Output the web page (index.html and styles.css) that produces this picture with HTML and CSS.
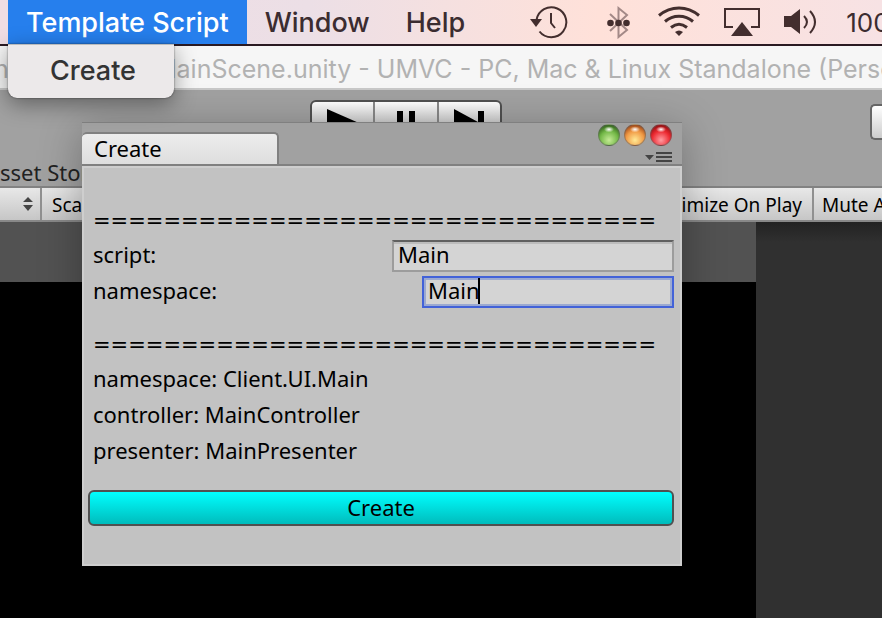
FILE: index.html
```html
<!DOCTYPE html>
<html lang="en"><head><meta charset="utf-8"><title>Unity</title><link rel="stylesheet" href="styles.css"></head>
<body>
<nav class="menubar">
  <div class="menus">
    <button class="menu active">Template Script</button>
    <button class="menu">Window</button>
    <button class="menu">Help</button>
  </div>
  <div class="status">
    <svg width="38" height="34" viewBox="0 0 38 34" fill="none" stroke="#432e2e" stroke-width="2"><path d="M6.500 15A15 15 0 1 1 9.500 26.500M21 8v10l4 5"/><path d="M0 14h12l-6 8z" fill="#432e2e" stroke="none"/></svg>
    <svg width="42" height="34" viewBox="-15 0 42 34"><path d="M3 9L20 25 11.500 32V3L20 10 3 26" fill="none" stroke="#a38987" stroke-width="2"/><g fill="#432e2e"><circle cx="3.500" cy="18" r="3.300"/><circle cx="11.500" cy="18" r="3.300"/><circle cx="19.500" cy="18" r="3.300"/></g></svg>
    <svg width="42" height="34" viewBox="0 0 42 34" fill="none" stroke="#432e2e" stroke-width="3"><path d="M1 10.500C13 .500 29 .500 41 10.500M7 16.500C15 9.500 27 9.500 35 16.500M13 22.500C18 18.500 24 18.500 29 22.500"/><path d="M17 27q4-3 8 0l-4 4z" fill="#432e2e" stroke="none"/></svg>
    <svg width="36" height="34" viewBox="0 0 36 34"><path d="M9 22H1V4h34v18h-8" fill="none" stroke="#432e2e" stroke-width="2"/><path d="M18 17L29 31H7z" fill="#432e2e"/></svg>
    <svg width="38" height="34" viewBox="0 0 38 34" fill="none" stroke="#432e2e" stroke-width="2"><path d="M0 11h7l9-7v25l-9-7H0z" fill="#432e2e" stroke="none"/><path d="M20 11q6 6 0 12M26 6q10 11 0 22"/></svg>
    <span class="battery">100%</span>
  </div>
  <div class="dropdown"><button>Create</button></div>
</nav>
<header class="titlebar"><span class="project">n</span><span>MainScene.unity - UMVC - PC, Mac &amp; Linux Standalone (Personal)</span></header>
<section class="toolbar">
  <div class="playback">
    <button aria-label="Play"><svg width="32" height="28" viewBox="0 0 32 28"><path d="M0 0L32 14 0 28z"/></svg></button>
    <button aria-label="Pause"><svg width="18" height="28" viewBox="0 0 18 28"><path d="M0 2h6v24H0zM12 2h6v24h-6z"/></svg></button>
    <button aria-label="Step"><svg width="30" height="28" viewBox="0 0 30 28"><path d="M0 0L24 13V2h6v24h-6V15L0 28z"/></svg></button>
  </div>
  <button class="cloud" aria-label="Collab"></button>
  <div class="dock-tab">sset Store</div>
</section>
<div class="gamebar">
  <button class="aspect" aria-label="Aspect"><svg width="10" height="14" viewBox="0 0 10 14"><path d="M5 0l5 5H0zM0 8h10L5 14z" fill="#444"/></svg></button>
  <span class="scale">Scale</span>
  <button class="toggle">Maximize On Play</button>
  <button class="toggle mute">Mute Audio</button>
</div>
<main class="viewport"><div class="game"></div><div class="side"></div></main>

<section class="window">
  <header class="window-head">
    <div class="tab">Create</div>
    <div class="controls">
      <div class="lights">
        <button class="light green" aria-label="Zoom"></button><button class="light orange" aria-label="Minimize"></button><button class="light red" aria-label="Close"></button>
      </div>
      <button class="options" aria-label="Options"><svg width="28" height="12" viewBox="0 0 28 12"><path d="M1 4h9L5.500 9zM12 1h16v2H12zM12 5h16v2H12zM12 9h16v2H12z" fill="#444"/></svg></button>
    </div>
  </header>
  <form class="body">
    <p class="rule">================================</p>
    <div class="row"><label for="script">script:</label><input id="script" class="wide" value="Main"></div>
    <div class="row"><label for="ns">namespace:</label><div class="field"><input id="ns" class="focused" value="Main"><i class="caret"></i></div></div>
    <p class="rule second">================================</p>
    <p class="line">namespace: Client.UI.Main</p>
    <p class="line">controller: MainController</p>
    <p class="line">presenter: MainPresenter</p>
    <button type="button" class="create">Create</button>
  </form>
</section>
</body></html>
```
FILE: styles.css
```css
* { box-sizing: border-box; }
body { margin: 0; height: 100vh; overflow: hidden; display: flex; flex-direction: column; position: relative; background: #a1a1a1; font-family: "Noto Sans", sans-serif; font-size: 22px; color: #000; }
button { font: inherit; color: inherit; border: 0; padding: 0; margin: 0; background: none; }
p { margin: 0; }
svg { display: block; }

.menubar { position: relative; z-index: 3; height: 46px; flex: none; display: flex; border-bottom: 2px solid #2a1a22; background: linear-gradient(90deg, #f0dde3, #ecdfe6 35%, #ffe1d9 68%, #f7e2e4); font-family: Inter, sans-serif; font-size: 27px; font-weight: 500; color: #3b2c30; white-space: nowrap; }
.menus { display: flex; padding-left: 8px; }
.menu { padding: 0 18px; }
.menu.active { background: #267fed; color: #fff; }
.status { display: flex; align-items: center; margin-left: 47px; flex: 1; min-width: 0; overflow: hidden; gap: 24px; }
.status svg { flex: none; }
.battery { font-weight: 400; font-size: 26px; }
.dropdown { position: absolute; left: 8px; top: 44px; width: 166px; height: 54px; background: #ece9ea; border-radius: 0 0 9px 9px; border-top: 1px solid #bbb; box-shadow: 0 6px 22px rgba(0,0,0,.4), 0 0 2px rgba(0,0,0,.6); }
.dropdown button { width: 100%; height: 100%; padding: 0 4px 2px 8px; color: #333; }

.titlebar { height: 44px; flex: none; display: flex; align-items: center; overflow: hidden; background: #f6f6f6; border-bottom: 2px solid #c8c8c8; color: #b2b2b2; font-family: Inter, sans-serif; font-size: 25px; line-height: 38px; padding-top: 3px; white-space: nowrap; }
.project { width: 154px; text-indent: -6px; flex: none; }

.toolbar { height: 98px; flex: none; position: relative; display: grid; grid-template-columns: 310px 192px 1fr 41px; background: #a1a1a1; border-bottom: 2px solid #828282; }
.playback { grid-column: 2; margin-top: 10px; height: 44px; display: flex; border: 2px solid #505050; border-radius: 6px; background: linear-gradient(#fff, #c4c4c4 60%); overflow: hidden; }
.playback button { flex: 1; display: flex; justify-content: center; padding-top: 7px; }
.playback button + button { border-left: 2px solid #888; }
.cloud { grid-column: 4; margin: 14px 0 0 29px; height: 36px; border: 2px solid #666; border-right: 0; border-radius: 5px 0 0 5px; background: linear-gradient(#fff, #ccc); }
.dock-tab { position: absolute; left: 0; bottom: 0; line-height: 28px; font-size: 22px; color: #222; }
.gamebar { height: 34px; flex: none; display: flex; align-items: stretch; background: linear-gradient(#e8e8e8, #c6c6c6); border-bottom: 2px solid #888; font-size: 19px; line-height: 34px; white-space: nowrap; overflow: hidden; }
.aspect { width: 42px; flex: none; display: flex; justify-content: flex-end; align-items: center; padding-right: 7px; border-right: 2px solid #909090; }
.scale { padding-left: 10px; flex: 1; }
.toggle { padding: 0 10px; flex: none; border-right: 2px solid #909090; }
.mute { width: 68px; overflow: hidden; text-align: left; padding: 0 0 0 8px; border: 0; }
.viewport { flex: 1; display: grid; grid-template-columns: 1fr 126px; }
.game { background: #000; border-top: 60px solid #525252; }
.side { background: linear-gradient(#222, #303030 20px); }

.window { position: absolute; z-index: 2; left: 82px; right: 200px; top: 122px; background: #c2c2c2; box-shadow: 0 8px 40px rgba(0,0,0,.3); }
.window-head { height: 44px; display: flex; justify-content: space-between; align-items: flex-end; background: #a1a1a1; border-top: 1px solid #808080; border-bottom: 2px solid #808080; }
.tab { width: 197px; height: 32px; padding-left: 12px; line-height: 29px; background: linear-gradient(#ededed, #dedede); border: 2px solid #808080; border-width: 2px 2px 0 0; border-radius: 5px 5px 0 0; }
.controls { height: 40px; padding-right: 10px; display: flex; flex-direction: column; align-items: flex-end; gap: 5px; }
.lights { display: flex; gap: 4px; }
.light { width: 22px; height: 22px; border-radius: 50%; border: 1px solid #6668; }
.green { background: radial-gradient(ellipse 5px 3px at 50% 22%, #fff, transparent), radial-gradient(circle at 50% 75%, #c5ea96, #73b847 50%, #143d08); }
.orange { background: radial-gradient(ellipse 5px 3px at 50% 22%, #fff, transparent), radial-gradient(circle at 50% 75%, #ffe995, #f19a45 50%, #792000); }
.red { background: radial-gradient(ellipse 5px 3px at 50% 22%, #fff, transparent), radial-gradient(circle at 50% 75%, #ff9da2, #ed2a32 50%, #670000); }
.body { border: 2px solid #cecece; padding: 36px 6px 38px 4px; display: flex; flex-direction: column; }
.rule { height: 32px; font-family: "DejaVu Sans", sans-serif; font-size: 21px; line-height: 34px; padding-left: 5px; white-space: nowrap; }
.row { display: flex; height: 32px; margin-top: 4px; justify-content: space-between; }
.row label, .line { height: 32px; padding-left: 5px; line-height: 28px; }
input { display: block; font: inherit; height: 32px; padding: 0 4px 4px; outline: 0; background: #d4d4d4; border: 2px solid #9c9c9c; border-top-color: #606060; box-shadow: inset 0 2px #bcbcbc; }
.wide { width: 282px; }
.field { position: relative; width: 252px; }
.field input { width: 100%; }
input.focused { border-color: #4262d8; box-shadow: inset 0 0 0 2px #9ba9d0; }
.caret { position: absolute; left: 56px; top: 2px; width: 2px; height: 26px; background: #000; }
.second { margin-top: 20px; }
.line { margin-top: 4px; }
.create { margin-top: 22px; height: 36px; padding-bottom: 4px; border: 2px solid #505050; border-radius: 6px; background: linear-gradient(#0ff, #00bcbc); }
```
